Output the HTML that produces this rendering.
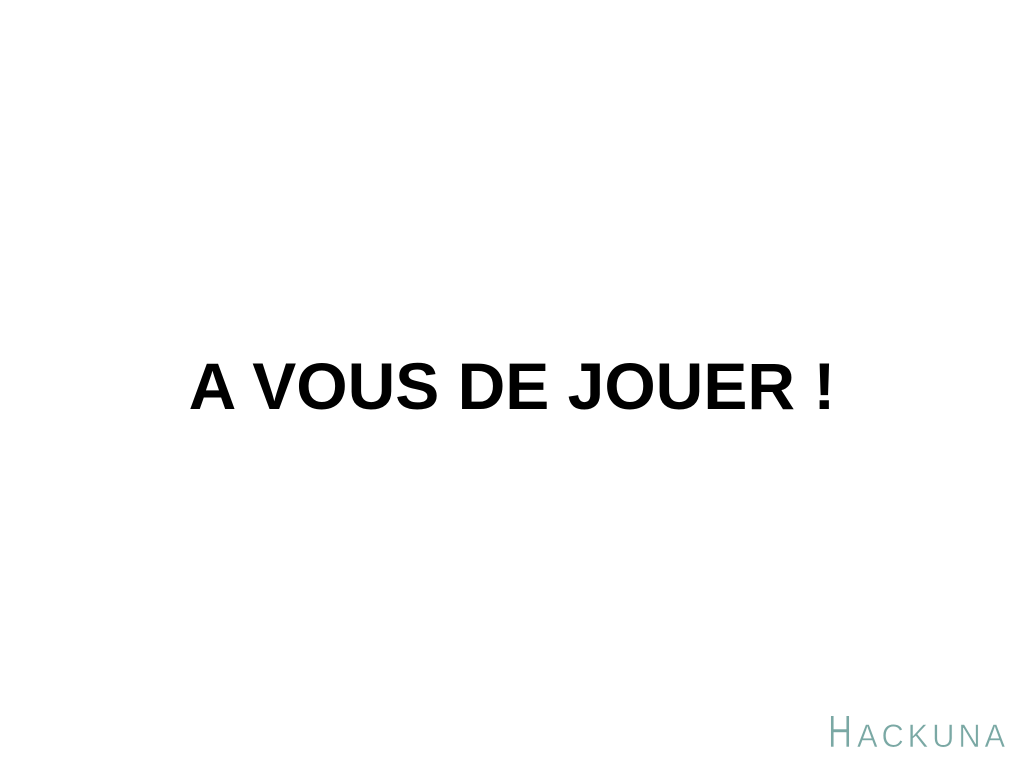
<!DOCTYPE html>
<html><head><meta charset="utf-8"><style>
html,body{margin:0;padding:0;width:1024px;height:768px;background:#fff;overflow:hidden;position:relative}
.t{position:absolute;left:0;width:1024px;top:351px;text-align:center;font-family:"Liberation Sans",Arial,sans-serif;font-weight:bold;font-size:66px;line-height:70px;color:#000}
svg{position:absolute;left:0;top:0}
</style></head><body>
<div class="t">A VOUS DE JOUER !</div>
<svg width="1024" height="768">
<text x="828" y="747" font-family="Liberation Sans, sans-serif" fill="#7aa8a4" stroke="#fff" stroke-width="0.6" font-size="45" textLength="24" lengthAdjust="spacingAndGlyphs">H</text>
<text x="857" y="747" font-family="Liberation Sans, sans-serif" fill="#7aa8a4" stroke="#fff" stroke-width="0.5" font-size="32" letter-spacing="4" textLength="152" lengthAdjust="spacingAndGlyphs">ACKUNA</text>
</svg>
</body></html>
